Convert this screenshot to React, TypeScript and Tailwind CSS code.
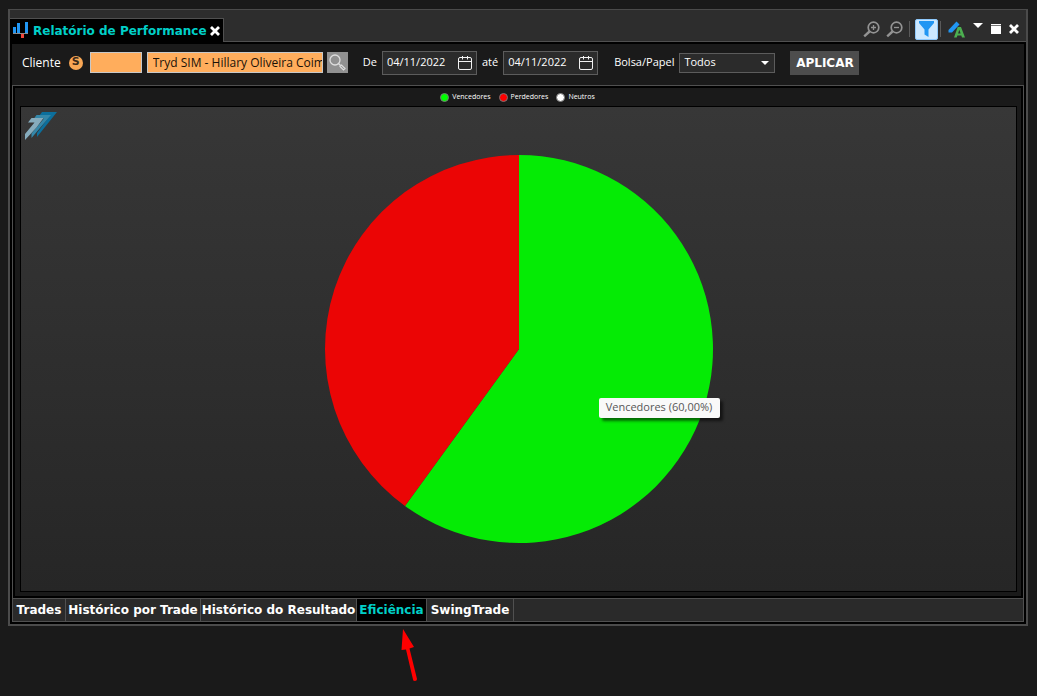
import { useState } from "react";
import type { ReactNode } from "react";

const bold = "font-['DejaVu_Sans',Verdana,sans-serif] font-bold";

function BarsIcon() {
  return (
    <svg width="16" height="17" viewBox="0 0 16 17" shapeRendering="crispEdges" aria-hidden="true">
      <path d="M0 5h3v6H0zM4 1h3v10H4zM12 0h3v11h-3z" fill="#2196f3" />
      <path d="M0 11h15v1H0z" fill="#8a8a8a" />
      <path d="M8 12h3v4H8z" fill="#f04438" />
    </svg>
  );
}

function CrossIcon() {
  return (
    <svg width="10" height="10" viewBox="0 0 10 10" aria-hidden="true">
      <path d="M1 1l8 8M9 1L1 9" stroke="#fff" strokeWidth="2.8" />
    </svg>
  );
}

function ZoomIcon({ plus }: { plus?: boolean }) {
  return (
    <svg width="17" height="17" viewBox="0 0 17 17" fill="none" stroke="#939393" aria-hidden="true">
      <circle cx="10.5" cy="6.5" r="5.3" strokeWidth="1.7" />
      <path d="M6.5 10.5L1.2 15.3" strokeWidth="2.4" />
      <path d={plus ? "M8 6.5h5M10.5 4v5" : "M8 6.5h5"} strokeWidth="1.3" />
    </svg>
  );
}

function CalendarIcon() {
  return (
    <svg width="14" height="14" viewBox="0 0 14 14" fill="none" stroke="#f2f2f2" aria-hidden="true">
      <rect x="0.5" y="1.5" width="13" height="12" rx="1.5" />
      <path d="M0.5 5.5h13M4.5 0v3.5M9.5 0v3.5" />
    </svg>
  );
}

function BrandMark() {
  return (
    <svg width="33" height="29" viewBox="0 0 33 29" aria-hidden="true">
      <path d="M18 0H33L13 25v-4L26 3.500H15.500z" fill="#0c6f9c" />
      <path d="M12.500 3H27L7.500 26v-4.500L20 6.500H10z" fill="#3487a9" />
      <path d="M7.500 6H19.500L12.500 15.500 1 28V22l9.500-11.500H4z" fill="#86acbd" />
    </svg>
  );
}

function DateField({ id, label }: { id: string; label: string }) {
  return (
    <div className="flex items-center gap-[5px]">
      <label htmlFor={id}>{label}</label>
      <div className="flex h-6 w-[95px] items-center justify-between border border-[#5c5c5c] bg-[#2b2b2b] pr-1 pl-1">
        <input id={id} defaultValue="04/11/2022" className="w-[66px] bg-transparent outline-none" />
        <button type="button" aria-label={`Calendário ${label}`} className="shrink-0">
          <CalendarIcon />
        </button>
      </div>
    </div>
  );
}

function Tool({ label, className, children }: { label: string; className?: string; children: ReactNode }) {
  return (
    <button type="button" aria-label={label} className={`flex items-center justify-center ${className ?? ""}`}>
      {children}
    </button>
  );
}

function Header() {
  return (
    <header className="flex h-8 items-end justify-between border-b border-[#505050] bg-[#2d2d2d]">
      <div className="-mb-px flex h-6 items-center border-t border-r border-[#505050] bg-black pr-[3px] pl-[3px]">
        <BarsIcon />
        <h1 className={`${bold} ml-1 text-[12px] text-[#00cfc8]`}>Relatório de Performance</h1>
        <Tool label="Fechar aba" className="ml-[3px]">
          <CrossIcon />
        </Tool>
      </div>
      <div className="flex h-6 items-center pr-[7px]">
        <Tool label="Aumentar zoom"><ZoomIcon plus /></Tool>
        <Tool label="Diminuir zoom" className="ml-[6px]"><ZoomIcon /></Tool>
        <span className="ml-[6px] h-4 w-px bg-[#5a5a5a]" />
        <Tool label="Filtro" className="ml-[5px] h-[21px] w-[23px] rounded-[2px] border border-[#8ec8fb] bg-[#cce8ff]">
          <svg width="15" height="16" viewBox="0 0 15 16" aria-hidden="true">
            <path d="M0 0h15v2L9.500 8.500V16L5.500 13.500V8.500L0 2z" fill="#2196f3" />
          </svg>
        </Tool>
        <span className="ml-[2px] h-4 w-px bg-[#5a5a5a]" />
        <Tool label="Cores" className="ml-[7px]">
          <svg width="17" height="17" viewBox="0 0 17 17" aria-hidden="true">
            <path d="M0.500 9L8.500 0.500l3 3L4 11.500H0.500z" fill="#2196f3" />
            <path d="M9.700 6h3.300l4 10.500h-3l-.7-2H9.400l-.7 2H6zM11.300 8.800l-1.200 3.700h2.500z" fill="#4caf50" fillRule="evenodd" />
          </svg>
        </Tool>
        <Tool label="Menu" className="mb-2 ml-[8px]">
          <svg width="10" height="5" viewBox="0 0 10 5" aria-hidden="true"><path d="M0 0h10L5 5z" fill="#fff" /></svg>
        </Tool>
        <Tool label="Maximizar" className="ml-2">
          <svg width="10" height="10" viewBox="0 0 10 10" shapeRendering="crispEdges" aria-hidden="true">
            <path d="M0 0h10v10H0z" fill="#fff" /><path d="M0 1h10v1H0z" fill="#777" />
          </svg>
        </Tool>
        <Tool label="Fechar" className="ml-2"><CrossIcon /></Tool>
      </div>
    </header>
  );
}

function Filters() {
  return (
    <form className="flex h-[41px] items-center bg-[#1a1a1a] pb-1 pl-[10px]" onSubmit={(e) => e.preventDefault()}>
      <label htmlFor="cliente">Cliente</label>
      <span className={`${bold} ml-2 flex size-[14px] items-center justify-center rounded-full bg-[#f9a755] text-[11px] text-[#3b2a1a]`}>S</span>
      <input id="cliente" className="ml-[7px] h-[21px] w-[52px] border border-[#c8c8c8] bg-[#ffad5c] px-1 text-black outline-none" />
      <input aria-label="Nome do cliente" defaultValue="Tryd SIM - Hillary Oliveira Coimbra" className="ml-[5px] h-[21px] w-[176px] border border-[#c8c8c8] bg-[#ffad5c] pl-[5px] text-[#1a1208] outline-none" />
      <button type="button" aria-label="Buscar cliente" className="ml-1 flex size-[21px] items-center justify-center bg-[#919191]">
        <svg width="17" height="17" viewBox="0 0 17 17" fill="none" stroke="#dedede" aria-hidden="true">
          <circle cx="6" cy="6" r="5" strokeWidth="1.300" />
          <path d="M9.500 9.500l2 2" strokeWidth="1.500" />
          <path d="M11 12.500l1.500-1.500 3.500 3.500-1.500 1.500z" strokeWidth="1.200" />
        </svg>
      </button>
      <div className="ml-[15px] flex items-center text-[11px]">
        <div className="flex gap-[5px]">
          <DateField id="de" label="De" />
          <DateField id="ate" label="até" />
        </div>
        <label htmlFor="papel" className="ml-4">Bolsa/Papel</label>
        <div className="relative ml-[5px]">
          <select id="papel" className="h-5 w-24 appearance-none border border-[#5c5c5c] bg-[#2b2b2b] pl-1 outline-none">
            <option>Todos</option>
          </select>
          <svg width="8" height="4" viewBox="0 0 8 4" className="pointer-events-none absolute top-2 right-[6px]" aria-hidden="true"><path d="M0 0h8L4 4z" fill="#fff" /></svg>
        </div>
      </div>
      <button type="submit" className={`${bold} ml-[15px] h-6 w-[69px] bg-[#4d4d4d] text-[12px]`}>APLICAR</button>
    </form>
  );
}

const legend = [
  { name: "Vencedores", dot: "bg-[#00ff00]" },
  { name: "Perdedores", dot: "bg-[#ff0000]" },
  { name: "Neutros", dot: "bg-white" },
];

function Chart() {
  return (
    <section className="flex flex-1 flex-col border border-b-0 border-[#505050] bg-black p-[2px]">
      <div className="flex flex-1 flex-col bg-[#1a1a1a] pr-1 pb-1 pl-[5px]">
        <ul className="flex h-[18px] items-center justify-center gap-2 pr-[2px]">
          {legend.map((item) => (
            <li key={item.name} className="flex items-center gap-[3px] text-[7px]">
              <span className={`size-[9px] rounded-full border border-[#777] ${item.dot}`} />
              {item.name}
            </li>
          ))}
        </ul>
        <div className="flex flex-1 items-start border border-black bg-linear-to-b from-[#373737] to-[#262626] pt-[5px] pl-[3px]">
          <BrandMark />
          <div className="flex flex-1 items-center justify-center self-stretch pr-9 pb-[6px]">
            <div className="relative">
              <svg width="388" height="388" viewBox="-194 -194 388 388" role="img" aria-label="Vencedores 60%, Perdedores 40%">
                <path d="M0 0V-194A194 194 0 1 1-114.030 156.950z" fill="#05eb05" />
                <path d="M0 0L-114.030 156.950A194 194 0 0 1 0-194z" fill="#eb0505" />
              </svg>
              <div role="tooltip" className="absolute top-[243px] left-[274px] flex h-5 w-[121px] items-center justify-center rounded-[2px] bg-[#f9f9f9] text-[11px] whitespace-nowrap text-[#575757] shadow-[3px_3px_3px_rgba(0,0,0,0.55)]">
                Vencedores (60,00%)
              </div>
            </div>
          </div>
        </div>
      </div>
    </section>
  );
}

const tabs = ["Trades", "Histórico por Trade", "Histórico do Resultado", "Eficiência", "SwingTrade"];

export default function App() {
  const [active, setActive] = useState("Eficiência");
  return (
    <div className="flex min-h-screen flex-col bg-[#1a1a1a] pt-[9px] pr-[9px] pb-[70px] pl-2 font-['Open_Sans','Noto_Sans',sans-serif] text-[12px] text-white">
      <main className="flex flex-1 flex-col border-2 border-t border-[#4b4b4b] bg-black">
        <Header />
        <div className="flex flex-1 flex-col p-[2px]">
          <Filters />
          <Chart />
          <nav className="grid h-6 grid-cols-[53px_135px_156px_70px_87px] border border-[#505050] bg-[#2a2a2a]">
            {tabs.map((tab) => (
              <div key={tab} className="relative flex">
                <button
                  type="button"
                  onClick={() => setActive(tab)}
                  className={`${bold} flex flex-1 items-center justify-center border-r border-[#505050] text-[12px] whitespace-nowrap ${tab === active ? "bg-black text-[#00cfc8]" : ""}`}
                >
                  {tab}
                </button>
                {tab === "Eficiência" && (
                  <svg width="18" height="54" viewBox="0 0 18 54" className="pointer-events-none absolute top-[30px] left-11" aria-hidden="true">
                    <path d="M2 0L13 18l-4.500 1.500L16 50q0 2-2 2t-2-1.500L5 20.500.5 21z" fill="#f00" />
                  </svg>
                )}
              </div>
            ))}
          </nav>
        </div>
      </main>
    </div>
  );
}
